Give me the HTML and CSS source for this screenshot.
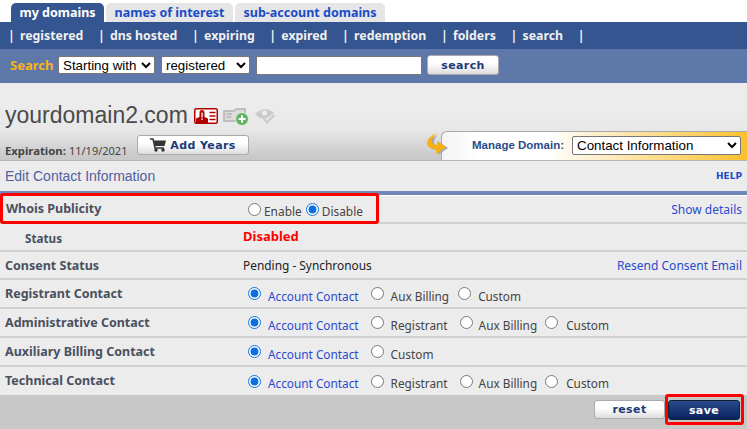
FILE: index.html
```html
<!DOCTYPE html>
<html lang="en">
<head>
<meta charset="utf-8">
<title>Edit Contact Information</title>
<link rel="stylesheet" href="styles.css">
</head>
<body>
<div class="tabs">
  <a class="tab active">my domains</a>
  <a class="tab">names of interest</a>
  <a class="tab">sub-account domains</a>
</div>
<nav class="nav">
  <span class="sep">|</span><a>registered</a>
  <span class="sep">|</span><a>dns hosted</a>
  <span class="sep">|</span><a>expiring</a>
  <span class="sep">|</span><a>expired</a>
  <span class="sep">|</span><a>redemption</a>
  <span class="sep">|</span><a>folders</a>
  <span class="sep">|</span><a>search</a>
  <span class="sep">|</span>
</nav>
<form class="search">
  <span class="search-label">Search</span>
  <select class="sel sel-a"><option>Starting with</option></select>
  <select class="sel sel-b"><option>registered</option></select>
  <input class="search-input" type="text">
  <button class="btn btn-search" type="button">search</button>
</form>
<header class="head">
  <div class="title-row">
    <h1 class="domain">yourdomain2.com</h1>
    <svg class="ic-id" width="24" height="16" viewBox="0 0 24 16"><rect x=".75" y=".75" width="22.5" height="14.5" rx="1.5" fill="#fff" stroke="#b00000" stroke-width="1.5"/><path d="M2 15V10.500L5.500 9V4.500Q5.500 2 8 2T10.500 4.500V9L14 10.500V15Z" fill="#b00000"/><rect x="7.400" y="4.500" width="1.300" height="5" fill="#fff"/><rect x="7.400" y="10.500" width="1.300" height="1.500" fill="#fff"/><path d="M15.500 4.500H21.500M15.500 8H21.500M15.500 11.500H21.500" stroke="#b00000" stroke-width="1.500"/></svg>
    <svg class="ic-add" width="26" height="20" viewBox="0 0 26 20"><path d="M1 5H11L13 3H22V15H1Z" fill="#ddd" stroke="#b4b4b4" stroke-width="1.500"/><path d="M3.500 8H9M3.500 11H8" stroke="#b4b4b4" stroke-width="1.500"/><circle cx="19" cy="13" r="6.500" fill="#62b462" stroke="#e0f0e0"/><path d="M15.500 13H22.500M19 9.500V16.500" stroke="#fff" stroke-width="2"/></svg>
    <svg class="ic-eye" width="20" height="16" viewBox="0 0 20 16"><path d="M0 6Q9-3 19 5L14 9Q10 12 5 10Z" fill="#cbcbcb"/><circle cx="9.500" cy="5" r="2.500" fill="#eee"/><path d="M9 11L12 14.500L19.500 7" fill="none" stroke="#cbcbcb" stroke-width="2.200"/></svg>
  </div>
  <div class="exp-row">
    <div class="exp-left">
      <span class="exp"><b>Expiration:</b> <span class="exp-date">11/19/2021</span></span>
      <button class="btn btn-add" type="button"><svg width="16" height="14" viewBox="0 0 16 14"><path d="M0 1H3L5 10H14" fill="none" stroke="#333" stroke-width="1.500"/><path d="M3.500 2.500H16L14.500 8H5Z" fill="#333"/><circle cx="6" cy="12" r="1.700" fill="#333"/><circle cx="13" cy="12" r="1.700" fill="#333"/></svg>Add Years</button>
      <svg class="arrow" width="21" height="22" viewBox="0 0 21 22"><path d="M11 2Q2 5 2 12Q3 17 11 17L11 22L21 15L12 9L12 13Q7 13 7 9Q7 5 11 2Z" fill="#a8a8a8"/><path d="M10 0Q0 4 0 11Q1 16 9 16L9 21L19 14L10 8L10 12Q5 12 5 8Q5 4 10 0Z" fill="#f8b010"/></svg>
    </div>
    <div class="manage">
      <label class="manage-label">Manage Domain:</label>
      <select class="sel sel-m"><option>Contact Information</option></select>
    </div>
  </div>
</header>
<div class="section">
  <h2 class="section-title">Edit Contact Information</h2>
  <a class="help">HELP</a>
</div>
<main class="form">
  <div class="row r28">
    <div class="lab lab-whois">Whois Publicity</div>
    <div class="val val-whois">
      <input class="radio" type="radio" name="w"><span class="opt">Enable</span>
      <input class="radio" type="radio" name="w" checked><span class="opt">Disable</span>
    </div>
    <a class="link link-show">Show details</a>
  </div>
  <div class="row r28">
    <div class="lab sub">Status</div>
    <div class="val val-status"><span class="disabled">Disabled</span></div>
  </div>
  <div class="row r28">
    <div class="lab lab-consent">Consent Status</div>
    <div class="val pending">Pending - Synchronous</div>
    <a class="link">Resend Consent Email</a>
  </div>
  <div class="row">
    <div class="lab">Registrant Contact</div>
    <div class="val val-low">
      <input class="radio" type="radio" name="r" checked><span class="opt sel-opt">Account Contact</span>
      <input class="radio" type="radio" name="r"><span class="opt">Aux Billing</span>
      <input class="radio" type="radio" name="r"><span class="opt">Custom</span>
    </div>
  </div>
  <div class="row">
    <div class="lab">Administrative Contact</div>
    <div class="val val-low">
      <input class="radio" type="radio" name="a" checked><span class="opt sel-opt">Account Contact</span>
      <input class="radio" type="radio" name="a"><span class="opt opt-reg">Registrant</span>
      <input class="radio" type="radio" name="a"><span class="opt">Aux Billing</span>
      <input class="radio" type="radio" name="a"><span class="opt">Custom</span>
    </div>
  </div>
  <div class="row">
    <div class="lab">Auxiliary Billing Contact</div>
    <div class="val val-low">
      <input class="radio" type="radio" name="x" checked><span class="opt sel-opt">Account Contact</span>
      <input class="radio" type="radio" name="x"><span class="opt">Custom</span>
    </div>
  </div>
  <div class="row last">
    <div class="lab">Technical Contact</div>
    <div class="val val-low">
      <input class="radio" type="radio" name="t" checked><span class="opt sel-opt">Account Contact</span>
      <input class="radio" type="radio" name="t"><span class="opt opt-reg">Registrant</span>
      <input class="radio" type="radio" name="t"><span class="opt">Aux Billing</span>
      <input class="radio" type="radio" name="t"><span class="opt">Custom</span>
    </div>
  </div>
</main>
<footer class="foot">
  <button class="btn btn-reset" type="button">reset</button>
  <button class="btn btn-save" type="button">save</button>
</footer>
<div class="hl hl-whois"></div>
<div class="hl hl-save"></div>
</body>
</html>
```
FILE: styles.css
```css
* { box-sizing: border-box; }
html, body { margin: 0; height: 429px; overflow: hidden; }
body { position: relative; background: #ececec; font-family: "Noto Sans", "Liberation Sans", sans-serif; font-size: 11.9px; color: #444; }
.tabs { height: 22px; background: #fff; padding: 3px 0 0 11px; display: flex; gap: 2px; font: bold 12.5px "Noto Sans", sans-serif; }
.tab { height: 19px; line-height: 19px; padding: 0 8.5px; border-radius: 5px 5px 0 0; background: #e6e6e6; color: #1a4cc8; }
.tab.active { background: #34558f; color: #fff; }
.nav { height: 27px; background: #34558f; color: #f0f0f0; display: flex; align-items: center; padding: 0 0 1px 8px; font: bold 12.3px "Noto Sans", sans-serif; }
.nav .sep { width: 12px; }
.nav a { margin-right: 14.7px; }
.search { height: 34px; background: #5f78aa; display: flex; align-items: center; padding: 0 0 2px 10px; }
.search-label { color: #f8b516; font: bold 13px "Noto Sans", sans-serif; width: 48px; }
.sel { height: 18px; font: 13.33px "Liberation Sans", Arial, sans-serif; color: #000; background: #fff; border: 1px solid #777; border-radius: 2px; padding: 0; }
.sel-a { width: 97px; margin-right: 6px; }
.sel-b { width: 89px; margin-right: 6px; }
.search-input { width: 166px; height: 19px; border: 1px solid #777; background: #fff; margin-right: 5px; padding: 0; }
.btn { font: bold 11px "DejaVu Sans", Verdana, sans-serif; letter-spacing: .4px; border: 1px solid #aaa; border-radius: 3px; padding: 0; cursor: pointer; background: linear-gradient(#fff 40%, #ddd); color: #1c3a78; }
.btn-search { width: 72px; height: 20px; }
.head { height: 78px; background: linear-gradient(#ececec 30%, #e8e8e8 60%, #c9c9c9 96%); border-bottom: 1px solid #b4b4b4; display: flex; flex-direction: column; }
.title-row { height: 51px; padding: 15px 0 0 5px; display: flex; align-items: center; }
.domain { margin: 0 6px 0 0; font: normal 23px "Liberation Sans", Arial, sans-serif; color: #4a4a4a; }
.ic-id { margin-right: 5px; }
.ic-add { margin-right: 6px; }
.exp-row { flex: 1; display: flex; }
.exp-left { display: flex; align-items: flex-start; padding-left: 5px; }
.exp { margin-top: 9px; width: 132px; }
.exp b { font-size: 11.3px; }
.exp-date { font-size: 11px; }
.btn-add { width: 112px; height: 20px; margin-top: 2px; display: flex; align-items: center; justify-content: center; gap: 4px; }
.arrow { margin: 0 -7px 0 178px; position: relative; z-index: 1; }
.manage { width: 306px; height: 29px; margin-top: -2px; border: 1px solid #aaa; border-right: 0; border-bottom: 0; border-radius: 6px 0 0 0; background: linear-gradient(90deg, #f4f4f4, #fff 12%, #fff 35%, #fbc02d 100%); display: flex; align-items: center; padding-bottom: 2px; }
.manage-label { margin-left: 30px; width: 100px; color: #2c4a8a; font: bold 11.5px "Liberation Sans", Arial, sans-serif; }
.sel-m { width: 169px; height: 19px; }
.section { height: 34px; display: flex; align-items: center; justify-content: space-between; padding: 0 5px; border-bottom: 4px solid #7088b8; }
.section-title { margin: 0; font: normal 14px "Liberation Sans", Arial, sans-serif; color: #5060a0; }
.help { font: bold 9px "DejaVu Sans", Verdana, sans-serif; color: #1a4cc8; }
.form { border-top: 1px solid #fff; }
.row { height: 29px; display: flex; align-items: center; border-bottom: 2px solid #d0d0d0; padding: 0 5px; }
.row.r28 { height: 28px; }
.row.last { border-bottom: 0; height: 28px; }
.lab { width: 238px; font: bold 12.5px "Noto Sans", sans-serif; color: #4a5060; margin-top: -1px; }
.lab-whois { padding-left: 1px; margin-top: -2px; }
.lab-consent { margin-top: 0; }
.lab.sub { padding-left: 20px; font-size: 11.7px; margin-top: 2px; }
.val { flex: 1; display: flex; align-items: center; }
.val-whois .opt { margin: 4px 0 0 3px; }
.val-whois .radio { margin-right: 0; margin-left: 4px; }
.val-whois .radio:first-child { margin-left: 5px; }
.val-low .opt { margin: 4px 9px 0 7px; font-size: 11.8px; }
.radio { width: 13px; height: 13px; margin: 0; accent-color: #0a6fe0; }
.val-low .radio:first-child { margin-left: 5px; }
.opt { color: #444; }
.val-low .opt.sel-opt { color: #2a4ad0; margin-right: 12px; }
.val-low .opt.opt-reg { margin-right: 12px; }
.val-low .opt-reg + .radio + .opt { margin-left: 6px; margin-right: 8px; }
.val-low .opt-reg + .radio + .opt + .radio + .opt { margin-left: 8px; }
.val-status { margin-top: -3px; }
.disabled { color: #ff0000; font: bold 13px "Noto Sans", sans-serif; }
.pending { color: #222; }
.link { color: #2a4ad0; font-size: 12px; }
.foot { height: 34px; background: #c8c8c8; display: flex; justify-content: flex-end; align-items: flex-start; padding: 5px 7px 0 0; gap: 3px; }
.btn-reset { width: 71px; height: 19px; }
.btn-save { width: 72px; height: 20px; background: linear-gradient(#2a4a8c, #0c2260); color: #fff; border-color: #123; }
.hl { position: absolute; border: 3px solid #f00; border-radius: 3px; }
.hl-whois { left: 0; top: 193px; width: 379px; height: 31px; }
.hl-save { left: 665px; top: 394px; width: 79px; height: 31px; }
```
